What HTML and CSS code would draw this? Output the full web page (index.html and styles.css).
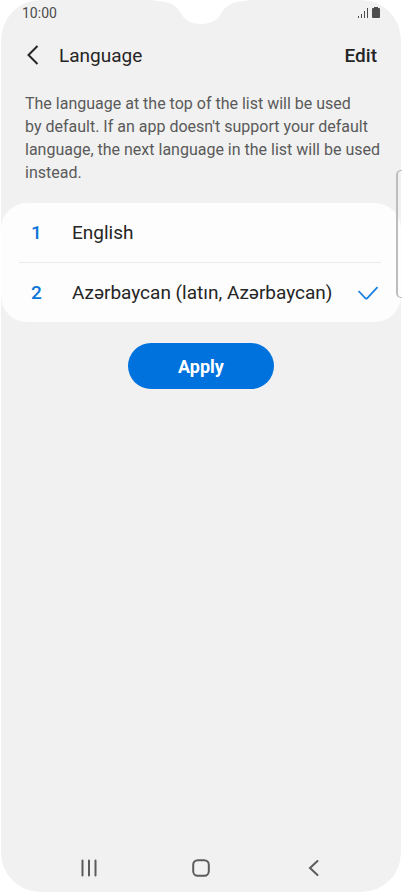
FILE: index.html
```html
<!DOCTYPE html>
<html lang="en">
<head>
<meta charset="utf-8">
<meta name="viewport" content="width=device-width, initial-scale=1">
<title>Language</title>
<link rel="stylesheet" href="styles.css">
</head>
<body>
<div class="screen">
  <svg class="notch" width="46" height="24" viewBox="0 0 46 24" aria-hidden="true"><path d="M-23 0V1C-8 1 -3 5 2 12C6 20 13 24 23 24C33 24 40 20 44 12C49 5 54 1 69 1V0Z"/></svg>
  <div class="status">
    <span class="time">10:00</span>
    <svg class="status-icons" width="24" height="12" viewBox="0 0 24 12" aria-hidden="true">
      <path d="M1 9h1v2h-1zM4 7h1v4h-1zM7 4h1v7h-1zM10 1h1v10h-1z"/>
      <path d="M17 0h4v1h1a1 1 0 0 1 1 1v8a1 1 0 0 1-1 1h-6a1 1 0 0 1-1-1V2a1 1 0 0 1 1-1h1z"/>
    </svg>
  </div>
  <header class="header">
    <button class="icon-button" type="button" aria-label="Back">
      <svg width="12" height="20" viewBox="0 0 12 20"><path d="M10.500 1L1.500 10L10.500 19"/></svg>
    </button>
    <h1 class="title">Language</h1>
    <button class="edit" type="button">Edit</button>
  </header>
  <main class="content">
    <p class="hint">The language at the top of the list will be used<br>by default. If an app doesn't support your default language, the next language in the list will be used instead.</p>
    <ul class="languages">
      <li><button class="row" type="button"><span class="rank">1</span><span class="name">English</span></button></li>
      <li><button class="row" type="button" aria-pressed="true"><span class="rank">2</span><span class="name">Azərbaycan (latın, Azərbaycan)</span>
        <svg class="check" width="22" height="14" viewBox="0 0 22 14" aria-hidden="true"><path d="M1.500 5L8.500 12.300Q9.300 13 10.100 12.300L20.500 1.200"/></svg></button></li>
    </ul>
    <button class="apply" type="button">Apply</button>
  </main>
  <nav class="nav">
    <button class="nav-button" type="button" aria-label="Recent apps"><svg width="18" height="18" viewBox="0 0 18 18"><path d="M2.500 1.500V16.500M9 1.500V16.500M15.500 1.500V16.500"/></svg></button>
    <button class="nav-button" type="button" aria-label="Home"><svg width="18" height="18" viewBox="0 0 18 18"><rect x="1.200" y="1.200" width="15.600" height="15.600" rx="4.500"/></svg></button>
    <button class="nav-button" type="button" aria-label="Go back"><svg width="18" height="18" viewBox="0 0 18 18"><path d="M13.500 2L6 9L13.500 16"/></svg></button>
  </nav>
  <div class="edge-handle"></div>
</div>
</body>
</html>
```
FILE: styles.css
```css
* {
  box-sizing: border-box;
}

body {
  margin: 0;
  background: #fff;
  color: #252525;
  font-family: Roboto, "Noto Sans", sans-serif;
}

button {
  margin: 0;
  padding: 0;
  border: 0;
  background: none;
  color: inherit;
  font: inherit;
  cursor: pointer;
}

svg {
  display: block;
  flex: none;
}

.screen {
  position: relative;
  display: flex;
  flex-direction: column;
  min-height: 100vh;
  border: 1px solid #fff;
  border-top: 0;
  border-radius: 40px;
  background: #f1f1f1;
  background-clip: padding-box;
}

.notch {
  position: absolute;
  top: 0;
  left: 50%;
  transform: translateX(-50%);
  overflow: visible;
  fill: #fff;
}

.status {
  display: flex;
  align-items: center;
  justify-content: space-between;
  height: 26px;
  padding: 0 20px 0 21px;
  color: #4c4c4c;
  font-size: 14px;
}

.status-icons {
  fill: #4c4c4c;
}

.header {
  display: flex;
  align-items: center;
  height: 58px;
  padding: 0 24px;
  font-size: 19px;
}

.icon-button {
  width: 34px;
  padding: 4px 2px;
}

.icon-button svg {
  fill: none;
  stroke: #252525;
  stroke-width: 2;
}

.title {
  flex: 1;
  margin: 0;
  font-size: 19px;
  font-weight: 400;
}

.edit {
  font-weight: 500;
}

.content {
  display: flex;
  flex: 1;
  flex-direction: column;
}

.hint {
  margin: 8px 16px 19px 24px;
  color: #5a5a5a;
  font-size: 16px;
  line-height: 23px;
}

.languages {
  margin: 0;
  padding: 0 20px 0 18px;
  border-radius: 26px;
  background: #fdfdfd;
  list-style: none;
}

.languages li + li {
  border-top: 1px solid #ebebeb;
}

.row {
  display: flex;
  align-items: center;
  width: 100%;
  height: 59px;
  padding: 0 2px 0 12px;
  font-size: 19px;
  text-align: left;
}

.rank {
  width: 41px;
  color: #0a75d8;
  font-weight: 500;
}

.name {
  flex: 1;
}

.check {
  fill: none;
  stroke: #1a80de;
  stroke-width: 1.8;
}

.apply {
  align-self: center;
  width: 146px;
  height: 46px;
  margin-top: 21px;
  border-radius: 23px;
  background: #0072de;
  color: #fff;
  font-size: 18px;
  font-weight: 700;
}

.nav {
  display: flex;
  justify-content: center;
  gap: 64px;
  padding-bottom: 1px;
}

.nav-button {
  display: flex;
  align-items: center;
  justify-content: center;
  width: 48px;
  height: 46px;
}

.nav-button svg {
  fill: none;
  stroke: #5c5c5c;
  stroke-width: 2;
  stroke-linecap: round;
}

.edge-handle {
  position: absolute;
  top: 170px;
  right: -1px;
  width: 6px;
  height: 128px;
  border: 1px solid #bdbdbd;
  border-right: 0;
  border-left-width: 2px;
  border-radius: 5px 0 0 5px;
}
```
